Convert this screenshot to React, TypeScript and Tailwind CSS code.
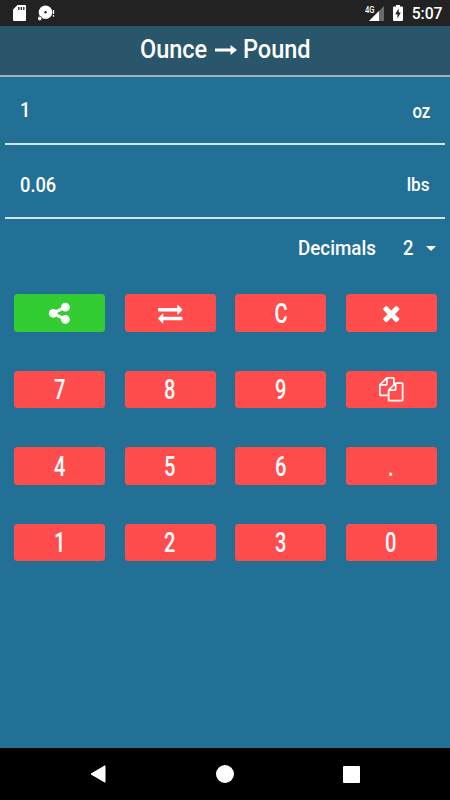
import { useState } from 'react'
import type { ReactNode } from 'react'
import clsx from 'clsx'

const OUNCES_PER_POUND = 16

const ICONS = {
  share: 'M1344 1024q133 0 226.5 93.5t93.5 226.5-93.5 226.5-226.5 93.5-226.5-93.5-93.5-226.5q0-12 2-34l-360-180q-92 86-218 86-133 0-226.5-93.5t-93.5-226.5 93.5-226.5 226.5-93.5q126 0 218 86l360-180q-2-22-2-34 0-133 93.5-226.5t226.5-93.5 226.5 93.5 93.5 226.5-93.5 226.5-226.5 93.5q-126 0-218-86l-360 180q2 22 2 34t-2 34l360 180q92-86 218-86z',
  swap: 'M1792 1184v192q0 13-9.5 22.5t-22.5 9.5h-1376v192q0 13-9.5 22.5t-22.5 9.5q-12 0-24-10l-319-320q-9-9-9-22 0-14 9-23l320-320q9-9 23-9 13 0 22.5 9.5t9.5 22.5v192h1376q13 0 22.5 9.5t9.5 22.5zm0-544q0 14-9 23l-320 320q-9 9-23 9-13 0-22.5-9.5t-9.5-22.5v-192h-1376q-13 0-22.5-9.5t-9.5-22.5v-192q0-13 9.5-22.5t22.5-9.5h1376v-192q0-14 9-23t23-9q12 0 24 10l319 319q9 9 9 23z',
  times: 'M1490 1322q0 40-28 68l-136 136q-28 28-68 28t-68-28l-294-294-294 294q-28 28-68 28t-68-28l-136-136q-28-28-28-68t28-68l294-294-294-294q-28-28-28-68t28-68l136-136q28-28 68-28t68 28l294 294 294-294q28-28 68-28t68 28l136 136q28 28 28 68t-28 68l-294 294 294 294q28 28 28 68z',
  copy: 'M1696 384q40 0 68 28t28 68v1216q0 40-28 68t-68 28h-960q-40 0-68-28t-28-68v-288h-544q-40 0-68-28t-28-68v-672q0-40 20-88t48-76l408-408q28-28 76-48t88-20h416q40 0 68 28t28 68v328q68-40 128-40h416zm-544 213l-299 299h299v-299zm-640-384l-299 299h299v-299zm196 647l316-316v-416h-384v416q0 40-28 68t-68 28h-416v640h512v-256q0-40 20-88t48-76zm956 804v-1152h-384v416q0 40-28 68t-68 28h-416v640h896z',
}

const KEYS = ['share', 'swap', 'C', 'times', '7', '8', '9', 'copy', '4', '5', '6', '.', '1', '2', '3', '0']

function Icon({ d }: { d: string }) {
  return (
    <svg viewBox="0 0 1792 1792" className="size-[24.5px] overflow-visible fill-current">
      <path d={d} />
    </svg>
  )
}

function StatusBar() {
  return (
    <div className="flex h-[26px] items-center bg-[#222222] pr-[9px] pl-[13px] text-white">
      <svg viewBox="0 0 13 16" className="h-4 w-[13px]">
        <path d="M4.500 0H12q1 0 1 1v14q0 1-1 1H1q-1 0-1-1V4.500z" fill="white" />
        <path d="M5.800 2v3M8.300 2v3M10.800 2v3" stroke="#222222" strokeWidth="1.300" />
      </svg>
      <svg viewBox="0 0 17 16" className="ml-3 h-4 w-[17px]">
        <circle cx="7.500" cy="7.300" r="6.800" fill="white" />
        <circle cx="7.500" cy="7.300" r="1.200" fill="#222222" />
        <circle cx="1.700" cy="13.500" r="2.200" fill="white" stroke="#222222" strokeWidth=".7" />
        <path d="M15.500 5v4M15.500 10v1.700" stroke="white" strokeWidth="1.300" />
      </svg>
      <div className="flex-1" />
      <svg viewBox="0 0 20 17" className="h-[17px] w-5">
        <path d="M19 1v15H4z" fill="#6b6b6b" />
        <path d="M14 6v10H4z" fill="white" />
        <text x="0" y="7.500" fill="white" fontFamily="Roboto, sans-serif" fontWeight="500" fontSize="8.500" textLength="9.500" lengthAdjust="spacingAndGlyphs">4G</text>
      </svg>
      <svg viewBox="0 0 10 16" className="ml-2 h-4 w-2.5">
        <path d="M3 0h4v1.500h2q1 0 1 1V15q0 1-1 1H1q-1 0-1-1V2.500q0-1 1-1h2z" fill="white" />
        <path d="M5.700 3.500L2.200 9.300h2.300v4.200l3.300-6H5.700z" fill="#222222" />
      </svg>
      <span className="ml-2 w-[30px] pt-0.5 text-right whitespace-nowrap">
        <span className="inline-block origin-right scale-x-[.98] text-base font-medium">5:07</span>
      </span>
    </div>
  )
}

function Row({ value, unit, className, unitClass }: { value: string; unit: ReactNode; className: string; unitClass: string }) {
  return (
    <div className={clsx('mx-[5px] flex items-center justify-between border-b-2 border-[#d5e2e9] px-[15px]', className)}>
      <span className="origin-left scale-x-[.87] text-[21px] font-medium">{value}</span>
      <span className={clsx('origin-right', unitClass)}>{unit}</span>
    </div>
  )
}

export default function App() {
  const [input, setInput] = useState('1')
  const [swapped, setSwapped] = useState(false)
  const decimals = 2

  const amount = Number(input) || 0
  const result = swapped ? amount * OUNCES_PER_POUND : amount / OUNCES_PER_POUND

  const press = (key: string) => {
    if (key === 'swap') setSwapped(s => !s)
    else if (key === 'C') setInput('0')
    else if (key === 'times') setInput(v => v.slice(0, -1) || '0')
    else if (key === 'copy') navigator.clipboard?.writeText(result.toFixed(decimals))
    else if (key === '.') setInput(v => (v.includes('.') ? v : v + '.'))
    else if (key !== 'share') setInput(v => (v === '0' ? key : v + key))
  }

  return (
    <div className="flex h-[800px] w-[450px] flex-col overflow-hidden bg-[#227095] font-['Roboto',sans-serif] text-white">
      <StatusBar />

      {/* Title */}
      <header className="flex h-[51px] items-center justify-center border-b-2 border-[#a3b1ba] bg-[#2a566c] pb-[2px] text-[25px] font-medium">
        <span className="w-[69px]">
          <span className="inline-block origin-left scale-x-[.94]">{swapped ? 'Pound' : 'Ounce'}</span>
        </span>
        <svg viewBox="0 0 22 10" className="mx-[6px] h-2.5 w-[22px]">
          <path d="M0 3.400h15.500V0L22 5l-6.500 5V6.600H0z" fill="white" />
        </svg>
        <span className="w-[68px]">
          <span className="inline-block origin-left scale-x-[.94]">{swapped ? 'Ounce' : 'Pound'}</span>
        </span>
      </header>

      <Row value={input} unit={swapped ? 'lbs' : 'oz'} className="h-[68px] pt-[2px]" unitClass="text-[20px] font-medium scale-x-[.84]" />
      <Row value={result.toFixed(decimals)} unit={swapped ? 'oz' : 'lbs'} className="h-[74px] pt-[10px]" unitClass="text-[18.500px] font-medium scale-x-[.93]" />

      {/* Decimals */}
      <div className="flex h-[75px] shrink-0 items-start justify-end pt-[15px] pr-[14px] text-xl font-medium">
        <span className="origin-right -translate-x-px scale-x-[.94]">Decimals</span>
        <span className="ml-[26px] origin-left scale-x-[.92]">{decimals}</span>
        <svg viewBox="0 0 10 5" className="mt-[12px] ml-[12px] h-[5px] w-2.5">
          <path d="M0 0h10L5 5z" fill="white" />
        </svg>
      </div>

      {/* Keypad */}
      <div className="mr-[13.200px] ml-[14px] grid grid-cols-4 gap-x-[19.400px] gap-y-[38.900px]">
        {KEYS.map(key => (
          <button
            key={key}
            onClick={() => press(key)}
            className={clsx('flex h-[37.700px] items-center justify-center rounded-[3.500px]', key === 'share' ? 'bg-[#33cd33]' : 'bg-[#ff4d4d]')}
          >
            {key in ICONS ? (
              <Icon d={ICONS[key as keyof typeof ICONS]} />
            ) : (
              <span className="scale-x-[.73] pt-px text-[27.500px] leading-none font-medium">{key}</span>
            )}
          </button>
        ))}
      </div>

      {/* Navigation bar */}
      <nav className="mt-auto flex h-[52px] items-center justify-between bg-black pr-[90px] pl-[90px]">
        <svg viewBox="0 0 16 18" className="h-[18px] w-4">
          <path d="M15 .8v16.400L1 9z" fill="white" stroke="white" strokeLinejoin="round" />
        </svg>
        <div className="size-[18px] rounded-full bg-white" />
        <div className="size-[17px] rounded-[1px] bg-white" />
      </nav>
    </div>
  )
}
